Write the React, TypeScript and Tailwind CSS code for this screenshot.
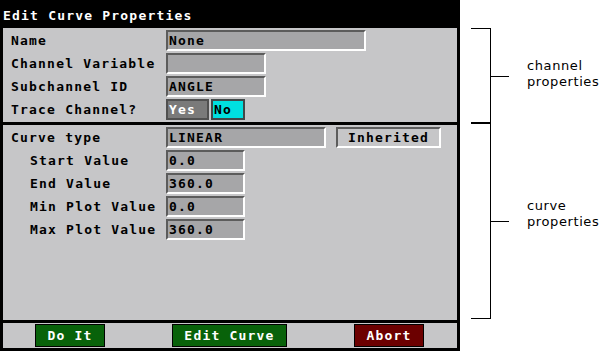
const mono = "font-['DejaVu_Sans_Mono',monospace] text-[13px] font-bold tracking-[1.2px]";

function Field({ w, value }: { w: string; value?: string }) {
  return (
    <div
      className={`${w} h-[21px] border-t-2 border-l-2 border-b-2 border-r-2 border-t-[#5c5c5c] border-l-[#5c5c5c] border-b-white border-r-white bg-[#a6a6a8] pl-px leading-[17px] text-black whitespace-pre`}
    >
      {value}
    </div>
  );
}

function Row({ label, indent, children }: { label: string; indent?: boolean; children: React.ReactNode }) {
  return (
    <div className="flex h-[21px] items-center">
      <div className={`w-[155px] leading-[21px] text-black whitespace-pre ${indent ? "pl-[19px]" : ""}`}>{label}</div>
      {children}
    </div>
  );
}

function ActionButton({ label, w, color }: { label: string; w: string; color: string }) {
  return (
    <div className={`${w} ${color} h-[23px] border border-black text-center leading-[21px] text-white`}>{label}</div>
  );
}

export default function App() {
  return (
    <div className="flex h-[351px] w-[604px] bg-white">
      <div className={`flex w-[460px] flex-col bg-black px-[3px] pb-[3px] ${mono}`}>
        <div className="h-[28px] pt-[8px] leading-[16px] text-white whitespace-pre">Edit Curve Properties</div>

        <div className="flex flex-1 flex-col bg-[#c6c6c8]">
          {/* channel properties */}
          <div className="flex h-[94px] flex-col gap-[2px] pl-[8px] pt-[2px]">
            <Row label="Name">
              <Field w="w-[200px]" value="None" />
            </Row>
            <Row label="Channel Variable">
              <Field w="w-[100px]" />
            </Row>
            <Row label="Subchannel ID">
              <Field w="w-[100px]" value="ANGLE" />
            </Row>
            <Row label="Trace Channel?">
              <div className="h-[21px] w-[43px] border-2 border-[#505050] bg-[#7a7a7a] pl-px leading-[17px] text-white">Yes</div>
              <div className="ml-[2px] h-[21px] w-[34px] border-2 border-[#404848] bg-[#00e0e0] pl-px leading-[17px] text-black">No</div>
            </Row>
          </div>

          <div className="h-[3px] bg-black" />

          {/* curve properties */}
          <div className="flex flex-1 flex-col gap-[2px] pl-[8px] pt-[2px]">
            <Row label="Curve type">
              <Field w="w-[160px]" value="LINEAR" />
              <div className="ml-[10px] h-[21px] w-[105px] border-t-2 border-l-2 border-b-2 border-r-2 border-t-[#5c5c5c] border-l-[#5c5c5c] border-b-white border-r-white text-center leading-[17px] text-black">
                Inherited
              </div>
            </Row>
            <Row label="Start Value" indent>
              <Field w="w-[79px]" value="0.0" />
            </Row>
            <Row label="End Value" indent>
              <Field w="w-[79px]" value="360.0" />
            </Row>
            <Row label="Min Plot Value" indent>
              <Field w="w-[79px]" value="0.0" />
            </Row>
            <Row label="Max Plot Value" indent>
              <Field w="w-[79px]" value="360.0" />
            </Row>
          </div>

          <div className="h-[3px] bg-black" />

          <div className="flex h-[25px] gap-[67px] pl-[32px] pt-px">
            <ActionButton label="Do It" w="w-[70px]" color="bg-[#08620a]" />
            <ActionButton label="Edit Curve" w="w-[115px]" color="bg-[#08620a]" />
            <ActionButton label="Abort" w="w-[70px]" color="bg-[#6c0000]" />
          </div>
        </div>
      </div>

      {/* annotation brackets */}
      <div className="relative flex-1">
        <svg className="absolute inset-0" width="144" height="351" viewBox="0 0 144 351">
          <g stroke="#000" strokeWidth="1" shapeRendering="crispEdges">
            <line x1="11" y1="28.5" x2="31" y2="28.5" />
            <line x1="30.5" y1="28" x2="30.5" y2="319" />
            <line x1="11" y1="123" x2="31" y2="123" strokeWidth="2" />
            <line x1="11" y1="318.5" x2="31" y2="318.5" />
            <line x1="31" y1="76.5" x2="49" y2="76.5" />
            <line x1="31" y1="221.5" x2="49" y2="221.5" />
          </g>
        </svg>
        <div className="absolute left-[67px] top-[58px] font-['DejaVu_Sans',sans-serif] text-[13px] font-normal leading-[16px] tracking-[0.6px] text-black">
          <div>channel</div>
          <div>properties</div>
        </div>
        <div className="absolute left-[67px] top-[198px] font-['DejaVu_Sans',sans-serif] text-[13px] font-normal leading-[16px] tracking-[0.6px] text-black">
          <div>curve</div>
          <div>properties</div>
        </div>
      </div>
    </div>
  );
}
